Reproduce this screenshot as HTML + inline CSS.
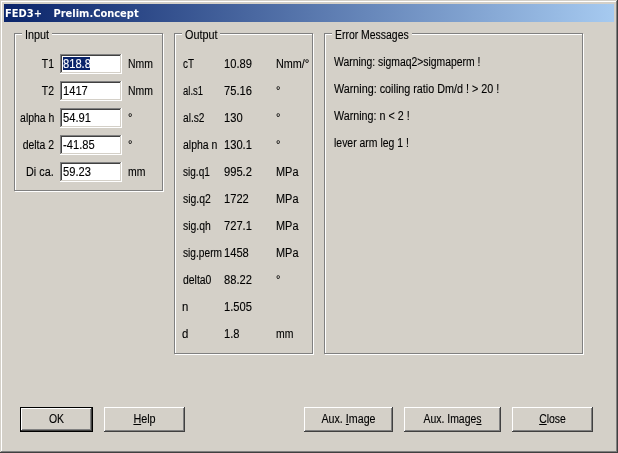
<!DOCTYPE html>
<html><head><meta charset="utf-8"><title>FED3+ Prelim.Concept</title>
<style>
html,body{margin:0;padding:0;}
body{width:618px;height:453px;overflow:hidden;background:#d4d0c8;font-family:"Liberation Sans",sans-serif;font-size:12px;color:#000;position:relative;}
.lay{position:absolute;left:0;top:0;width:618px;height:453px;will-change:transform;}
.win{position:absolute;left:0;top:0;width:618px;height:453px;background:#d4d0c8;box-shadow:inset -1px -1px 0 #404040,inset 1px 1px 0 #d4d0c8,inset -2px -2px 0 #808080,inset 2px 2px 0 #fff;}
.title{position:absolute;left:4px;top:4px;width:610px;height:18px;background:linear-gradient(to right,#0a246a,#a6caf0);}
.title span{position:absolute;left:1px;top:3px;color:#fff;font-family:"DejaVu Sans Condensed","Liberation Sans",sans-serif;font-weight:bold;font-size:11px;line-height:13px;white-space:pre;word-spacing:0.4px;}
.grp{position:absolute;box-sizing:border-box;border:1px solid #808080;box-shadow:1px 1px 0 #fff, inset 1px 1px 0 #fff;}
.grp b{position:absolute;top:-2px;height:4px;background:#d4d0c8;}
.t{position:absolute;line-height:14px;height:14px;white-space:pre;transform:scaleX(0.87);transform-origin:0 0;-webkit-text-stroke:0.12px #000;}
.r{transform-origin:100% 0;}
.c{transform-origin:50% 0;text-align:center;}
.ed{position:absolute;width:62px;height:20px;background:#fff;box-shadow:inset -1px -1px 0 #fff,inset 1px 1px 0 #808080,inset -2px -2px 0 #d4d0c8,inset 2px 2px 0 #404040;}
.sel{position:absolute;left:63px;top:57px;width:27px;height:13px;background:#0a246a;}
.w{color:#fff;-webkit-text-stroke:0.12px #fff;}
.btn{position:absolute;height:25px;background:#d4d0c8;box-shadow:inset -1px -1px 0 #404040,inset 1px 1px 0 #fff,inset -2px -2px 0 #808080,inset 2px 2px 0 #d4d0c8;}
.def{position:absolute;box-sizing:border-box;border:1px solid #000;}
em{font-style:normal;font-size:11px;position:relative;top:-1px;display:inline-block;transform:scaleX(1.15);transform-origin:0 0;}
u{text-decoration:underline;text-underline-offset:1px;}
</style></head><body>
<div class="win"></div><div class="lay">
<div class="title"><span>FED3+   Prelim.Concept</span></div>

<div class="grp" style="left:14px;top:33px;width:149px;height:158px"><b style="left:7px;width:30px"></b></div>
<span class="t" style="left:25px;top:28px;transform:scaleX(0.9)">Input</span>
<div class="grp" style="left:174px;top:33px;width:139px;height:321px"><b style="left:7px;width:38px"></b></div>
<span class="t" style="left:185px;top:28px;transform:scaleX(0.9)">Output</span>
<div class="grp" style="left:324px;top:33px;width:259px;height:321px"><b style="left:7px;width:80px"></b></div>
<span class="t" style="left:335px;top:28px">Error Messages</span>
<span class="t r" style="right:564px;top:57px">T1</span>
<div class="ed" style="left:60px;top:54px"></div>
<div class="sel"></div>
<span class="t w" style="left:63px;top:57px;transform:scaleX(0.93)">818.8</span>
<span class="t" style="left:128px;top:57px">Nmm</span>
<span class="t r" style="right:564px;top:84px">T2</span>
<div class="ed" style="left:60px;top:81px"></div>
<span class="t" style="left:63px;top:84px;transform:scaleX(0.93)">1417</span>
<span class="t" style="left:128px;top:84px">Nmm</span>
<span class="t r" style="right:564px;top:111px">alpha h</span>
<div class="ed" style="left:60px;top:108px"></div>
<span class="t" style="left:63px;top:111px;transform:scaleX(0.93)">54.91</span>
<span class="t" style="left:128px;top:111px"><em>°</em></span>
<span class="t r" style="right:564px;top:138px">delta 2</span>
<div class="ed" style="left:60px;top:135px"></div>
<span class="t" style="left:63px;top:138px;transform:scaleX(0.93)">-41.85</span>
<span class="t" style="left:128px;top:138px"><em>°</em></span>
<span class="t r" style="right:564px;top:165px;transform:scaleX(0.9)">Di ca.</span>
<div class="ed" style="left:60px;top:162px"></div>
<span class="t" style="left:63px;top:165px;transform:scaleX(0.93)">59.23</span>
<span class="t" style="left:128px;top:165px">mm</span>
<span class="t" style="left:183px;top:57px;transform:scaleX(0.825)">cT</span><span class="t" style="left:224px;top:57px;transform:scaleX(0.93)">10.89</span><span class="t" style="left:276px;top:57px;transform:scaleX(0.9)">Nmm/<em>°</em></span>
<span class="t" style="left:183px;top:84px;transform:scaleX(0.79)">al.s1</span><span class="t" style="left:224px;top:84px;transform:scaleX(0.93)">75.16</span><span class="t" style="left:276px;top:84px"><em>°</em></span>
<span class="t" style="left:183px;top:111px;transform:scaleX(0.85)">al.s2</span><span class="t" style="left:224px;top:111px;transform:scaleX(0.93)">130</span><span class="t" style="left:276px;top:111px"><em>°</em></span>
<span class="t" style="left:183px;top:138px;transform:scaleX(0.874)">alpha n</span><span class="t" style="left:224px;top:138px;transform:scaleX(0.93)">130.1</span><span class="t" style="left:276px;top:138px"><em>°</em></span>
<span class="t" style="left:183px;top:165px;transform:scaleX(0.838)">sig.q1</span><span class="t" style="left:224px;top:165px;transform:scaleX(0.93)">995.2</span><span class="t" style="left:276px;top:165px;transform:scaleX(0.91)">MPa</span>
<span class="t" style="left:183px;top:192px;transform:scaleX(0.868)">sig.q2</span><span class="t" style="left:224px;top:192px;transform:scaleX(0.93)">1722</span><span class="t" style="left:276px;top:192px;transform:scaleX(0.91)">MPa</span>
<span class="t" style="left:183px;top:219px;transform:scaleX(0.868)">sig.qh</span><span class="t" style="left:224px;top:219px;transform:scaleX(0.93)">727.1</span><span class="t" style="left:276px;top:219px;transform:scaleX(0.91)">MPa</span>
<span class="t" style="left:183px;top:246px;transform:scaleX(0.848)">sig.perm</span><span class="t" style="left:224px;top:246px;transform:scaleX(0.93)">1458</span><span class="t" style="left:276px;top:246px;transform:scaleX(0.91)">MPa</span>
<span class="t" style="left:183px;top:273px;transform:scaleX(0.869)">delta0</span><span class="t" style="left:224px;top:273px;transform:scaleX(0.93)">88.22</span><span class="t" style="left:276px;top:273px"><em>°</em></span>
<span class="t" style="left:182px;top:300px;transform:scaleX(0.95)">n</span><span class="t" style="left:224px;top:300px;transform:scaleX(0.93)">1.505</span>
<span class="t" style="left:182px;top:327px;transform:scaleX(0.95)">d</span><span class="t" style="left:224px;top:327px;transform:scaleX(0.93)">1.8</span><span class="t" style="left:276px;top:327px">mm</span>
<span class="t" style="left:334px;top:55px;transform:scaleX(0.865)">Warning: sigmaq2&gt;sigmaperm !</span>
<span class="t" style="left:334px;top:82px;transform:scaleX(0.898)">Warning: coiling ratio Dm/d ! &gt; 20 !</span>
<span class="t" style="left:334px;top:109px;transform:scaleX(0.894)">Warning: n &lt; 2 !</span>
<span class="t" style="left:334px;top:136px">lever arm leg 1 !</span>
<div class="def" style="left:20px;top:407px;width:73px;height:25px"></div>
<div class="btn" style="left:21px;top:408px;width:71px;height:23px"></div>
<span class="t c" style="left:20px;width:73px;top:412px">OK</span>
<div class="btn" style="left:104px;top:407px;width:81px"></div>
<span class="t c" style="left:104px;width:81px;top:412px;transform:scaleX(0.9)"><u>H</u>elp</span>
<div class="btn" style="left:304px;top:407px;width:89px"></div>
<span class="t c" style="left:304px;width:89px;top:412px;transform:scaleX(0.89)">Aux. <u>I</u>mage</span>
<div class="btn" style="left:404px;top:407px;width:97px"></div>
<span class="t c" style="left:404px;width:97px;top:412px">Aux. Image<u>s</u></span>
<div class="btn" style="left:512px;top:407px;width:81px"></div>
<span class="t c" style="left:512px;width:81px;top:412px"><u>C</u>lose</span>
</div></body></html>
